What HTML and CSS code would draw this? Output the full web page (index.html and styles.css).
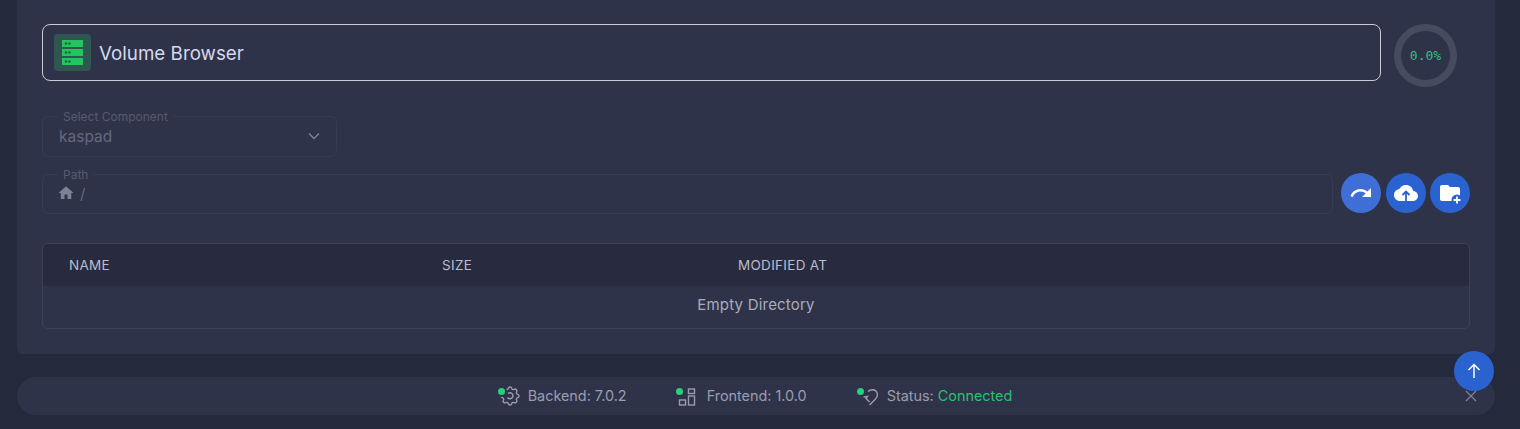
FILE: index.html
```html
<!DOCTYPE html>
<html lang="en">
<head>
    <meta charset="UTF-8">
    <meta name="viewport" content="width=device-width, initial-scale=1.0">
    <title>Volume Browser</title>
    <link rel="stylesheet" href="styles.css">
</head>
<body>
    <main class="card">
        <div class="top-row">
            <div class="title-box">
                <span class="title-icon">
                    <svg width="21" height="25" viewBox="0 0 21 25">
                        <g fill="#22c55e">
                            <rect x="0" y="0" width="21" height="7"/>
                            <rect x="0" y="9" width="21" height="7"/>
                            <rect x="0" y="18" width="21" height="7"/>
                        </g>
                        <g fill="#1f5f46">
                            <circle cx="4" cy="3.5" r="1.2"/>
                            <circle cx="7.5" cy="3.5" r="1.2"/>
                            <circle cx="4" cy="12.5" r="1.2"/>
                            <circle cx="7.5" cy="12.5" r="1.2"/>
                            <circle cx="4" cy="21.5" r="1.2"/>
                            <circle cx="7.5" cy="21.5" r="1.2"/>
                        </g>
                    </svg>
                </span>
                <h1 class="title">Volume Browser</h1>
            </div>
            <div class="progress-ring"><span>0.0%</span></div>
        </div>

        <fieldset class="field field-select">
            <legend>Select Component</legend>
            <div class="field-body">
                <span>kaspad</span>
                <svg class="chevron" width="12" height="8" viewBox="0 0 12 8"><path d="M1 1.500l5 5 5-5" fill="none" stroke="currentColor" stroke-width="1.400"/></svg>
            </div>
        </fieldset>

        <div class="path-row">
            <fieldset class="field field-path">
                <legend>Path</legend>
                <div class="field-body">
                    <svg class="home-icon" width="18" height="18" viewBox="0 0 24 24"><path fill="currentColor" d="M10 20v-6h4v6h5v-8h3L12 3 2 12h3v8z"/></svg>
                    <span class="slash">/</span>
                </div>
            </fieldset>
            <div class="actions">
                <button class="round-btn round-btn-light">
                    <svg width="24" height="24" viewBox="0 0 24 24"><path fill="#fff" d="M18.400 10.600C16.550 8.990 14.150 8 11.500 8c-4.650 0-8.580 3.030-9.960 7.220L3.900 16c1.050-3.190 4.050-5.500 7.600-5.500 1.950 0 3.730.720 5.120 1.880L13 16h9V7l-3.600 3.600z"/></svg>
                </button>
                <button class="round-btn">
                    <svg width="24" height="24" viewBox="0 0 24 24"><path fill="#fff" d="M19.350 10.040C18.670 6.590 15.640 4 12 4 9.110 4 6.600 5.640 5.350 8.040 2.340 8.360 0 10.910 0 14c0 3.310 2.690 6 6 6h13c2.760 0 5-2.240 5-5 0-2.640-2.050-4.780-4.650-4.960z"/><path d="M12 20v-9M8.500 14L12 10.500l3.500 3.500" fill="none" stroke="#2a62cf" stroke-width="1.800"/></svg>
                </button>
                <button class="round-btn">
                    <svg width="24" height="24" viewBox="0 0 24 24"><path fill="#fff" d="M20 6h-8l-2-2H4c-1.110 0-1.990.890-1.990 2L2 18c0 1.110.890 2 2 2h16c1.110 0 2-.890 2-2V8c0-1.110-.890-2-2-2z"/><circle cx="19" cy="19" r="5.500" fill="#2a62cf"/><path d="M19 15.500v7M15.500 19h7" stroke="#fff" stroke-width="1.800"/></svg>
                </button>
            </div>
        </div>

        <div class="table">
            <div class="table-head">
                <span>Name</span>
                <span>Size</span>
                <span>Modified At</span>
            </div>
            <div class="table-empty">Empty Directory</div>
        </div>
    </main>

    <footer class="footer">
        <div class="footer-item">
            <span class="dot"></span>
            <svg class="footer-icon" width="24" height="24" viewBox="0 0 24 24"><path d="M10.325 4.317c.426-1.756 2.924-1.756 3.350 0a1.724 1.724 0 0 0 2.573 1.066c1.543-.940 3.310.826 2.370 2.370a1.724 1.724 0 0 0 1.065 2.572c1.756.426 1.756 2.924 0 3.350a1.724 1.724 0 0 0-1.066 2.573c.940 1.543-.826 3.310-2.370 2.370a1.724 1.724 0 0 0-2.572 1.065c-.426 1.756-2.924 1.756-3.350 0a1.724 1.724 0 0 0-2.573-1.066c-1.543.940-3.310-.826-2.370-2.370a1.724 1.724 0 0 0-1.065-2.572c-1.756-.426-1.756-2.924 0-3.350a1.724 1.724 0 0 0 1.066-2.573c-.940-1.543.826-3.310 2.370-2.370 1 .608 2.296.070 2.572-1.065z"/><path d="M10 9.500a3 3 0 1 1-.500 4"/></svg>
            <span class="footer-text">Backend: 7.0.2</span>
        </div>
        <div class="footer-item">
            <span class="dot dot-shift"></span>
            <svg class="footer-icon" width="24" height="24" viewBox="0 0 24 24"><rect x="11.500" y="5" width="6" height="4.500"/><rect x="11.500" y="12" width="6" height="9"/><rect x="2.500" y="16" width="6" height="5"/></svg>
            <span class="footer-text">Frontend: 1.0.0</span>
        </div>
        <div class="footer-item">
            <span class="dot"></span>
            <svg class="footer-icon" width="24" height="24" viewBox="0 0 24 24"><path d="M11 7.500c2.500-2.500 7.500-2.500 9 1 1 2.500 0 5-2 7l-5.500 5.500"/><path d="M6.500 13l4-.5-1.500 2 3.500 3.500"/></svg>
            <span class="footer-text">Status: <span class="connected">Connected</span></span>
        </div>
        <svg class="footer-close" width="14" height="14" viewBox="0 0 14 14"><path d="M2 2l10 10M12 2L2 12" stroke="currentColor" stroke-width="1.300"/></svg>
    </footer>

    <button class="scroll-top">
        <svg width="20" height="20" viewBox="0 0 20 20" fill="none" stroke="#fff" stroke-width="1.500"><path d="M10 17V3.500M4.500 9L10 3.500 15.500 9"/></svg>
    </button>
</body>
</html>
```

FILE: styles.css
```css
* {
    box-sizing: border-box;
}
html, body {
    height: 429px;
    overflow: hidden;
}
body {
    margin: 0;
    padding: 0 25px 0 17px;
    background-color: #25293c;
    color: #cfd3ec;
    font-family: Inter, "Liberation Sans", sans-serif;
}
.card {
    height: 354px;
    padding: 24px 25px 0;
    background-color: #2f3349;
    border-radius: 0 0 6px 6px;
}
.top-row {
    display: flex;
    align-items: flex-start;
    gap: 13px;
}
.title-box {
    width: 1339px;
    height: 57px;
    display: flex;
    align-items: center;
    gap: 8px;
    padding-left: 11px;
    border: 1px solid #c9ccd6;
    border-radius: 8px;
}
.title-icon {
    width: 37px;
    height: 37px;
    display: flex;
    align-items: center;
    justify-content: center;
    background-color: #2f5650;
    border-radius: 4px;
}
.title-icon svg {
    display: block;
}
.title {
    margin: 1px 0 0;
    font-size: 18.8px;
    font-weight: 400;
    color: #d5d8ee;
}
.progress-ring {
    width: 63px;
    height: 63px;
    flex-shrink: 0;
    display: flex;
    align-items: center;
    justify-content: center;
    border: 7px solid #474b60;
    border-radius: 50%;
    color: #2fc07a;
    font-family: "DejaVu Sans Mono", monospace;
    font-size: 13px;
}
.field {
    margin: 0;
    padding: 0 16px;
    min-width: 0;
    border: 1px solid #383c53;
    border-radius: 6px;
    color: #646880;
}
.field legend {
    margin-left: -1px;
    padding: 0 5px;
    font-size: 12px;
    line-height: 15px;
    color: #565a72;
}
.field-body {
    height: 32px;
    display: flex;
    align-items: center;
    padding-bottom: 8px;
}
.field-select {
    width: 295px;
    margin-top: 22px;
    font-size: 15.5px;
}
.chevron {
    margin-left: auto;
    margin-right: 0;
    color: #7d8196;
}
.path-row {
    display: flex;
    align-items: flex-end;
    gap: 8px;
    margin-top: 10px;
}
.field-path {
    width: 1291px;
    color: #7d8196;
}
.field-path .field-body {
    height: 31px;
    padding-bottom: 9px;
}
.home-icon {
    margin-left: -2px;
}
.slash {
    margin-left: 5px;
    font-size: 15px;
    color: #646880;
}
.actions {
    display: flex;
    gap: 4.5px;
    margin-bottom: 1px;
}
.round-btn {
    width: 40px;
    height: 40px;
    display: flex;
    align-items: center;
    justify-content: center;
    padding: 0;
    border: none;
    border-radius: 50%;
    background-color: #2a62cf;
}
.round-btn-light {
    background-color: #3f6fd6;
}
.table {
    width: 1428px;
    margin-top: 29px;
    border: 1px solid #3d4158;
    border-radius: 6px;
    overflow: hidden;
}
.table-head {
    height: 42px;
    display: grid;
    grid-template-columns: 373px 296px 1fr;
    align-items: center;
    padding-left: 26px;
    background-color: #282b40;
    font-size: 13.5px;
    letter-spacing: 0.3px;
    text-transform: uppercase;
    color: #b9bccb;
}
.table-empty {
    height: 42px;
    display: flex;
    align-items: center;
    justify-content: center;
    padding-bottom: 6px;
    font-size: 15px;
    letter-spacing: 0.2px;
    color: #a9acbd;
}
.footer {
    position: relative;
    height: 38px;
    margin-top: 23px;
    padding-right: 2px;
    display: flex;
    align-items: center;
    justify-content: center;
    gap: 50px;
    background-color: #2f3349;
    border-radius: 19px;
    color: #9a9db0;
}
.footer-item {
    position: relative;
    display: flex;
    align-items: center;
    gap: 6px;
}
.footer-icon {
    display: block;
    fill: none;
    stroke: currentColor;
    stroke-width: 1.4;
}
.footer-text {
    margin-top: -1px;
    font-size: 14.4px;
}
.connected {
    color: #27c26c;
}
.dot {
    position: absolute;
    left: 0;
    top: 4px;
    width: 7px;
    height: 7px;
    border-radius: 50%;
    background-color: #27d07a;
    box-shadow: 0 0 0 2px #2f3349;
}
.dot-shift {
    left: -1px;
}
.footer-close {
    position: absolute;
    right: 17px;
    top: 12px;
    color: #7d8196;
}
.scroll-top {
    position: fixed;
    left: 1454px;
    top: 351px;
    width: 40px;
    height: 40px;
    display: flex;
    align-items: center;
    justify-content: center;
    padding: 0;
    border: none;
    border-radius: 50%;
    background-color: #2a62cf;
}
```
